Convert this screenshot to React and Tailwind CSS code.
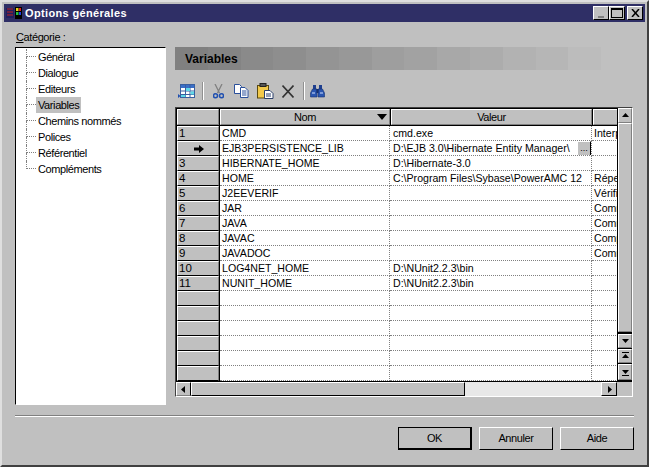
const FONT = "font-['Liberation_Sans',Arial,sans-serif]";

const rows = [
  ["1", "CMD", "cmd.exe", "Interpréteur"],
  ["", "EJB3PERSISTENCE_LIB", "D:\\EJB 3.0\\Hibernate Entity Manager\\", "", true],
  ["3", "HIBERNATE_HOME", "D:\\Hibernate-3.0", ""],
  ["4", "HOME", "C:\\Program Files\\Sybase\\PowerAMC 12", "Répertoire"],
  ["5", "J2EEVERIF", "", "Vérificateur"],
  ["6", "JAR", "", "Commande"],
  ["7", "JAVA", "", "Commande"],
  ["8", "JAVAC", "", "Compilateur"],
  ["9", "JAVADOC", "", "Commande"],
  ["10", "LOG4NET_HOME", "D:\\NUnit2.2.3\\bin", ""],
  ["11", "NUNIT_HOME", "D:\\NUnit2.2.3\\bin", ""],
  ["", "", "", ""],
  ["", "", "", ""],
  ["", "", "", ""],
  ["", "", "", ""],
  ["", "", "", ""],
  ["", "", "", ""],
];

const tree = ["Général", "Dialogue", "Editeurs", "Variables", "Chemins nommés", "Polices", "Référentiel", "Compléments"];
const blocks = ["#808080", "#848484", "#8a8a8a", "#8e8e8e", "#949494", "#989898", "#9e9e9e", "#a2a2a2", "#a8a8a8", "#acacac", "#b2b2b2", "#b6b6b6", "#bcbcbc", "#c0c0c0"];

const bevel = "border border-t-white border-l-white border-r-[#808080] border-b-[#808080]";
const UI = "text-[11px] tracking-[-0.4px]";

function Tri({ dir = "down", bar }) {
  const p = { down: "1,2 8,2 4.5,6", up: "1,6 8,6 4.5,2", left: "6,1 6,8 2,4.5", right: "3,1 3,8 7,4.5" }[dir];
  return (
    <svg width="9" height="9" viewBox="0 0 9 9">
      <polygon points={p} fill="#000" />
      {bar === "top" && <rect x="1" y="0" width="7" height="1" fill="#000" />}
      {bar === "bottom" && <rect x="1" y="7" width="7" height="1" fill="#000" />}
    </svg>
  );
}

function ScrollBtn({ children, className = "" }) {
  return <div className={`bg-[#c0c0c0] ${bevel} flex items-center justify-center shrink-0 ${className}`}>{children}</div>;
}

function GridIcon() {
  return (
    <svg width="17" height="15" viewBox="0 0 17 15" className="shrink-0">
      <path d="M0 10l2.500 2L0 14z" fill="#1f4fb0" />
      <rect x="2.500" y="0.500" width="14" height="13" fill="#fff" stroke="#3a5f9f" />
      <rect x="3" y="1" width="13" height="3" fill="#3a6fc8" />
      <path d="M3 7h13M3 10.500h13M7.500 1v12M12 1v12" stroke="#3a5f9f" />
      <rect x="8" y="4" width="4" height="3" fill="#5fd8e8" />
      <rect x="12.500" y="7.500" width="3.500" height="3" fill="#5fd8e8" />
      <rect x="3" y="11" width="4.500" height="2" fill="#5fd8e8" />
    </svg>
  );
}
function Cut() {
  return (
    <svg width="11" height="15" viewBox="0 0 11 15" fill="none" className="shrink-0">
      <path d="M2 0l4.500 9M9 0L4.500 9" stroke="#808080" strokeWidth="1.300" />
      <circle cx="2.500" cy="11.800" r="2" stroke="#1f4fb0" strokeWidth="1.500" />
      <circle cx="8.500" cy="11.800" r="2" stroke="#1f4fb0" strokeWidth="1.500" />
    </svg>
  );
}
function CopyIcon() {
  return (
    <svg width="15" height="14" viewBox="0 0 15 14" className="shrink-0">
      <path d="M.5.5h5l2 2v7h-7z" fill="#fff" stroke="#2a4f9a" />
      <path d="M6.500 3.500h4.500l3 3v7H6.500z" fill="#fff" stroke="#2a4f9a" />
      <path d="M8 7h4.500M8 9h4.500M8 11h4.500" stroke="#2a4f9a" />
    </svg>
  );
}
function PasteIcon() {
  return (
    <svg width="17" height="16" viewBox="0 0 17 16" className="shrink-0">
      <rect x="0.500" y="2.500" width="11" height="12.500" fill="#f2c94a" stroke="#5a4a10" />
      <rect x="3" y="0.500" width="6" height="3" fill="#555" stroke="#222" />
      <path d="M7.500 7.500h5.500l3 3v5H7.500z" fill="#fff" stroke="#2a3f6a" />
      <path d="M9 11h5M9 13h5" stroke="#2a3f6a" />
    </svg>
  );
}
function DeleteIcon() {
  return (
    <svg width="12" height="13" viewBox="0 0 12 13" className="shrink-0">
      <path d="M.5 .5l11 12M11.500 .5L.5 12.500" stroke="#333" strokeWidth="1.600" />
    </svg>
  );
}
function Binoculars() {
  return (
    <svg width="15" height="15" viewBox="0 0 15 15" className="shrink-0">
      <path d="M3 1h3v4H3zM9 1h3v4H9z" fill="#1f3f8f" />
      <path d="M2.500 5h4.500v8H.500V9zM8 5h4.500l2 4v4H8z" fill="#2a55b0" stroke="#14306f" strokeWidth=".6" />
      <rect x="6.500" y="5" width="2" height="4" fill="#14306f" />
      <path d="M2 9h3M10 9h3" stroke="#cfe0ff" />
    </svg>
  );
}
function Sep({ className = "" }) {
  return <div className={`w-px h-[18px] shrink-0 bg-[#909090] border-r border-r-white box-content ${className}`} />;
}

function Button({ children, def }) {
  const inner = `w-[74px] h-[23px] flex items-center justify-center ${UI} text-black bg-[#c0c0c0] border-t border-l border-t-white border-l-white border-r border-b ${def ? "border-r-2 border-b-2 border-r-black border-b-black outline outline-1 outline-black -outline-offset-1" : "border-r-black border-b-black"}`;
  return <div className={inner}>{children}</div>;
}

function Row({ r }) {
  const [num, name, value, extra, current] = r;
  return (
    <div className="flex h-[15px]">
      <div className={`w-[42px] shrink-0 h-[15px] bg-[#c0c0c0] border border-t-white border-l-white border-r-[#808080] border-b-black text-[11.500px] leading-[13px] pl-[1px] flex items-center ${current ? "justify-center" : ""}`}>
        {current ? (
          <svg width="10" height="8" viewBox="0 0 10 8"><path d="M0 2.500h5V0l5 4-5 4V5.500H0z" fill="#000" /></svg>
        ) : num}
      </div>
      <div className="w-px shrink-0 bg-black" />
      <div className="w-[170px] shrink-0 bg-white border-r border-b border-dotted border-[#808080] pl-[2px] text-[10.600px] leading-[14px] whitespace-nowrap overflow-hidden">{name}</div>
      <div className="w-[202px] shrink-0 bg-white border-r border-b border-dotted border-[#808080] pl-[3px] text-[10.600px] leading-[14px] whitespace-nowrap overflow-hidden flex justify-between">
        <span className={current ? "overflow-hidden w-[183px] shrink-0" : ""}>{value}</span>
        {current && (
          <div className={`w-[14px] h-[15px] -mb-px bg-[#c0c0c0] ${bevel} border-r-black border-b-black shrink-0 flex items-center justify-center text-[9px] leading-[6px] pb-[2px]`}>...</div>
        )}
      </div>
      <div className="w-[26px] shrink-0 bg-white border-b border-dotted border-[#808080] pl-[2px] text-[10.600px] leading-[14px] whitespace-nowrap overflow-hidden">{extra}</div>
    </div>
  );
}

export default function App() {
  return (
    <div className={`${FONT} w-[649px] h-[467px] bg-[#c0c0c0] border-2 border-t-[#dfdfdf] border-l-[#dfdfdf] border-r-[#404040] border-b-[#404040] p-[2px] flex flex-col overflow-hidden text-black`}>
      <div className="h-[18px] shrink-0 bg-[#2f2f66] flex items-center pl-[2px] pr-[2px] text-white">
        <svg width="16" height="14" viewBox="0 0 16 14" className="shrink-0">
          <rect x="0" y="2" width="8" height="10" fill="#202060" />
          <path d="M1 3h6M1 6h6M1 9h6" stroke="#c02020" />
          <rect x="9" y="1" width="7" height="12" fill="#000" />
          <rect x="10" y="2" width="2.500" height="3" fill="#e8d020" />
          <rect x="13" y="2" width="2" height="3" fill="#e02020" />
          <rect x="10" y="6" width="2.500" height="3" fill="#20c040" />
          <rect x="13" y="6" width="2" height="3" fill="#2040e0" />
        </svg>
        <span className="ml-[3px] text-[11px] font-bold tracking-[0.35px]">Options générales</span>
        <div className="ml-auto flex items-center">
          <div className={`w-[16px] h-[14px] bg-[#c0c0c0] ${bevel} border-r-black border-b-black relative flex items-end justify-center pb-[1px]`}>
            <div className="w-[6px] h-[2px] bg-[#808080]" />
          </div>
          <div className={`w-[16px] h-[14px] bg-[#c0c0c0] ${bevel} border-r-black border-b-black p-[1px]`}>
            <div className="w-full h-full border border-t-2 border-black" />
          </div>
          <div className={`ml-[2px] w-[16px] h-[14px] bg-[#c0c0c0] ${bevel} border-r-black border-b-black flex items-center justify-center`}>
            <svg width="9" height="8" viewBox="0 0 9 8"><path d="M1 0l7 8M8 0L1 8" stroke="#000" strokeWidth="1.500" /></svg>
          </div>
        </div>
      </div>

      <div className="flex-1 flex flex-col pl-[11px] pr-[11px] min-h-0">
        <div className="flex flex-1 min-h-0">
          <div className="w-[151px] shrink-0 flex flex-col pt-[8px]">
            <div className={`h-[17px] ${UI} leading-[15px] pl-px`}><span className="underline">C</span>atégorie :</div>
            <div className="h-[358px] bg-white border border-t-black border-l-black border-r-white border-b-white pt-[1px] pl-[10px]">
              {tree.map((t, i) => (
                <div key={t} className="flex h-4 items-center">
                  <div className="w-[10px] h-4 flex flex-col shrink-0">
                    <div className="h-2 border-l border-b border-dotted border-[#808080]" />
                    <div className={`h-2 ${i < tree.length - 1 ? "border-l border-dotted border-[#808080]" : ""}`} />
                  </div>
                  <span className={`${UI} leading-4 px-[2px] h-4 ${t === "Variables" ? "bg-[#c0c0c0]" : ""}`}>{t}</span>
                </div>
              ))}
            </div>
          </div>

          <div className="ml-[9px] flex-1 flex flex-col pt-[25px] min-w-0">
            <div className="h-[23px] shrink-0 flex relative">
              {blocks.map((c) => (
                <div key={c} className="flex-1" style={{ background: c }} />
              ))}
              <div className="absolute inset-0 pl-[10px] flex items-center text-[12px] font-bold">Variables</div>
            </div>
            <div className="h-[37px] shrink-0 flex items-center pl-[3px] pt-[5px]">
              <GridIcon />
              <Sep className="ml-[7px]" />
              <div className="ml-[9px]"><Cut /></div>
              <div className="ml-[10px]"><CopyIcon /></div>
              <div className="ml-[8px]"><PasteIcon /></div>
              <div className="ml-[8px]"><DeleteIcon /></div>
              <Sep className="ml-[9px]" />
              <div className="ml-[5px]"><Binoculars /></div>
            </div>
            <div className="w-[458px] h-[290px] shrink-0 border-t border-l border-[#404040] border-r border-b border-r-white border-b-white flex flex-col bg-[#c0c0c0]">
              <div className="flex h-[273px] shrink-0">
                <div className="w-[441px] shrink-0 flex flex-col border-t border-l border-black">
                  <div className={`flex h-[16px] shrink-0 ${UI}`}>
                    <div className={`w-[42px] shrink-0 bg-[#c0c0c0] ${bevel}`} />
                    <div className="w-px bg-black shrink-0" />
                    <div className={`w-[170px] shrink-0 bg-[#c0c0c0] ${bevel} flex items-center justify-center relative`}>
                      Nom
                      <svg className="absolute right-[2px] top-[4px]" width="10" height="6" viewBox="0 0 10 6"><path d="M0 0h10L5 6z" fill="#000" /></svg>
                    </div>
                    <div className="w-px bg-black shrink-0" />
                    <div className={`w-[201px] shrink-0 bg-[#c0c0c0] ${bevel} flex items-center justify-center`}>Valeur</div>
                    <div className="w-px bg-black shrink-0" />
                    <div className={`w-[26px] shrink-0 bg-[#c0c0c0] ${bevel}`} />
                  </div>
                  <div className="h-px bg-black shrink-0" />
                  {rows.map((r, i) => (
                    <Row key={i} r={r} />
                  ))}
                </div>
                <div className="w-[15px] shrink-0 flex flex-col border-l border-black bg-black">
                  <ScrollBtn className="h-[15px]"><Tri dir="up" /></ScrollBtn>
                  <div className={`h-[209px] bg-[#c0c0c0] ${bevel} shrink-0`} />
                  <div className="h-[2px] shrink-0" />
                  <ScrollBtn className="h-[14px]"><Tri dir="down" /></ScrollBtn>
                  <div className="h-px shrink-0" />
                  <ScrollBtn className="h-[14px]"><Tri dir="up" bar="top" /></ScrollBtn>
                  <div className="h-px shrink-0" />
                  <ScrollBtn className="h-[16px]"><Tri dir="down" bar="bottom" /></ScrollBtn>
                </div>
              </div>
              <div className="h-[15px] shrink-0 flex border-t border-black">
                <ScrollBtn className="w-[15px] border-r-black"><Tri dir="left" /></ScrollBtn>
                <div className={`w-[274px] bg-[#c0c0c0] ${bevel} border-r-black border-b-black shrink-0`} />
                <div className="flex-1 bg-[#e8e8e8]" />
                <ScrollBtn className="w-[16px] border-r-black border-b-black"><Tri dir="right" /></ScrollBtn>
                <div className="w-[15px] shrink-0 bg-[#c0c0c0]" />
              </div>
            </div>
          </div>
        </div>

        <div className="h-[2px] mt-[10px] shrink-0 bg-[#808080] border-b border-b-white" />
        <div className="flex justify-end gap-[7px] pt-[10px] pb-[13px] shrink-0">
          <Button def>OK</Button>
          <Button>Annuler</Button>
          <Button>Aide</Button>
        </div>
      </div>
    </div>
  );
}
